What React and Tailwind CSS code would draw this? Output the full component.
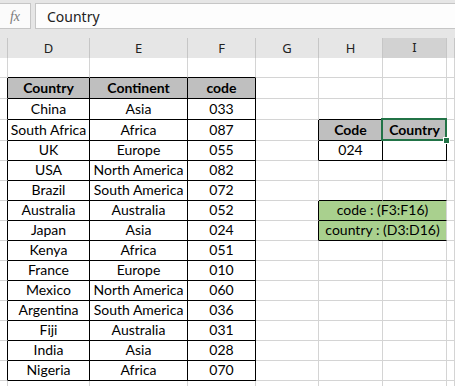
const data = [
  ["China", "Asia", "033"],
  ["South Africa", "Africa", "087"],
  ["UK", "Europe", "055"],
  ["USA", "North America", "082"],
  ["Brazil", "South America", "072"],
  ["Australia", "Australia", "052"],
  ["Japan", "Asia", "024"],
  ["Kenya", "Africa", "051"],
  ["France", "Europe", "010"],
  ["Mexico", "North America", "060"],
  ["Argentina", "South America", "036"],
  ["Fiji", "Australia", "031"],
  ["India", "Asia", "028"],
  ["Nigeria", "Africa", "070"],
];

const letters = ["", "D", "E", "F", "G", "H", "I", ""];

// which side of a cell is a black table border
function rightBlack(r, c) {
  if (r >= 2 && r <= 16 && c <= 3) return true;
  if (r >= 4 && r <= 5 && c >= 4 && c <= 6) return true;
  if (r >= 8 && r <= 9 && (c === 4 || c === 6)) return true;
  return false;
}

function bottomBlack(r, c) {
  if (r >= 1 && r <= 16 && c >= 1 && c <= 3) return true;
  if (r >= 3 && r <= 5 && c >= 5 && c <= 6) return true;
  if (r >= 7 && r <= 9 && c >= 5 && c <= 6) return true;
  return false;
}

function Cell({ r, c, span, children, bold, bg, selected }) {
  return (
    <div
      className={
        "relative flex items-end justify-center pb-[1px] whitespace-nowrap border-r border-b " +
        (rightBlack(r, c) ? "border-r-black " : "border-r-[#d4d4d4] ") +
        (bottomBlack(r, c) ? "border-b-black " : "border-b-[#d4d4d4] ") +
        (bold ? "font-bold " : "") +
        (span ? "col-span-2 " : "") +
        (bg || "bg-white")
      }
    >
      {children}
      {selected && (
        <>
          <div className="absolute z-10 -left-[2px] -top-[2px] -right-[1px] -bottom-[1px] border-2 border-[#217346]" />
          <div className="absolute z-20 -right-[4px] -bottom-[4px] w-[7px] h-[7px] bg-[#217346] border border-white" />
        </>
      )}
    </div>
  );
}

function cellsFor(r) {
  const out = [];
  for (let c = 0; c < 8; c++) {
    let text = null;
    let bold = false;
    let bg = null;
    let selected = false;
    let span = false;

    if (r === 2 && c >= 1 && c <= 3) {
      text = ["Country", "Continent", "code"][c - 1];
      bold = true;
      bg = "bg-[#bfbfbf]";
    } else if (r >= 3 && r <= 16 && c >= 1 && c <= 3) {
      text = data[r - 3][c - 1];
    } else if (r === 4 && c === 5) {
      text = "Code";
      bold = true;
      bg = "bg-[#bfbfbf]";
    } else if (r === 4 && c === 6) {
      text = "Country";
      bold = true;
      bg = "bg-[#bfbfbf]";
      selected = true;
    } else if (r === 5 && c === 5) {
      text = "024";
    } else if ((r === 8 || r === 9) && c === 5) {
      text = r === 8 ? "code : (F3:F16)" : "country : (D3:D16)";
      bg = "bg-[#a9d08e]";
      span = true;
    } else if ((r === 8 || r === 9) && c === 6) {
      continue;
    }

    out.push(
      <Cell key={r + "-" + c} r={r} c={c} span={span} bold={bold} bg={bg} selected={selected}>
        {text}
      </Cell>
    );
  }
  return out;
}

export default function App() {
  const rows = [];
  for (let r = 1; r <= 17; r++) rows.push(...cellsFor(r));

  return (
    <div className="w-[455px] h-[386px] overflow-hidden bg-white">
      {/* formula bar */}
      <div className="h-[38px] bg-[#e6e6e6] flex items-start pt-[3px] gap-[4px]">
        <div className="w-[31px] h-[26px] shrink-0 bg-[#fbfbfb] border border-l-0 border-[#c6c6c6] flex items-center justify-center">
          <span className="italic text-[14px] text-[#7a7a7a] font-['Liberation_Serif',serif]">fx</span>
        </div>
        <div className="flex-1 h-[26px] bg-[#fdfdfd] border border-r-0 border-[#c6c6c6] flex items-center pl-[11px] text-[14px] text-[#222] font-['Noto_Sans',sans-serif]">
          Country
        </div>
      </div>

      {/* column headers */}
      <div className="grid grid-cols-[8px_82px_98px_68px_63px_64px_64px_8px] h-[20px] bg-[#e6e6e6] text-[13px] text-[#222] font-['Noto_Sans',sans-serif]">
        {letters.map((l, i) => (
          <div
            key={i}
            className={
              "flex items-center justify-center border-r border-[#c6c6c6] " +
              (i === 6 ? "bg-[#d2d2d2] border-b-2 border-b-[#217346]" : "border-b border-b-[#d4d4d4]")
            }
          >
            {l}
          </div>
        ))}
      </div>

      {/* sheet */}
      <div className="grid grid-cols-[8px_82px_98px_68px_63px_64px_64px_8px] grid-rows-[20px_21px_21px_21px_20px_20px_20px_20px_20px_20px_20px_20px_20px_20px_20px_20px_20px] text-[14px] leading-[18px] text-black font-['Lato',sans-serif]">
        {rows}
      </div>
    </div>
  );
}
